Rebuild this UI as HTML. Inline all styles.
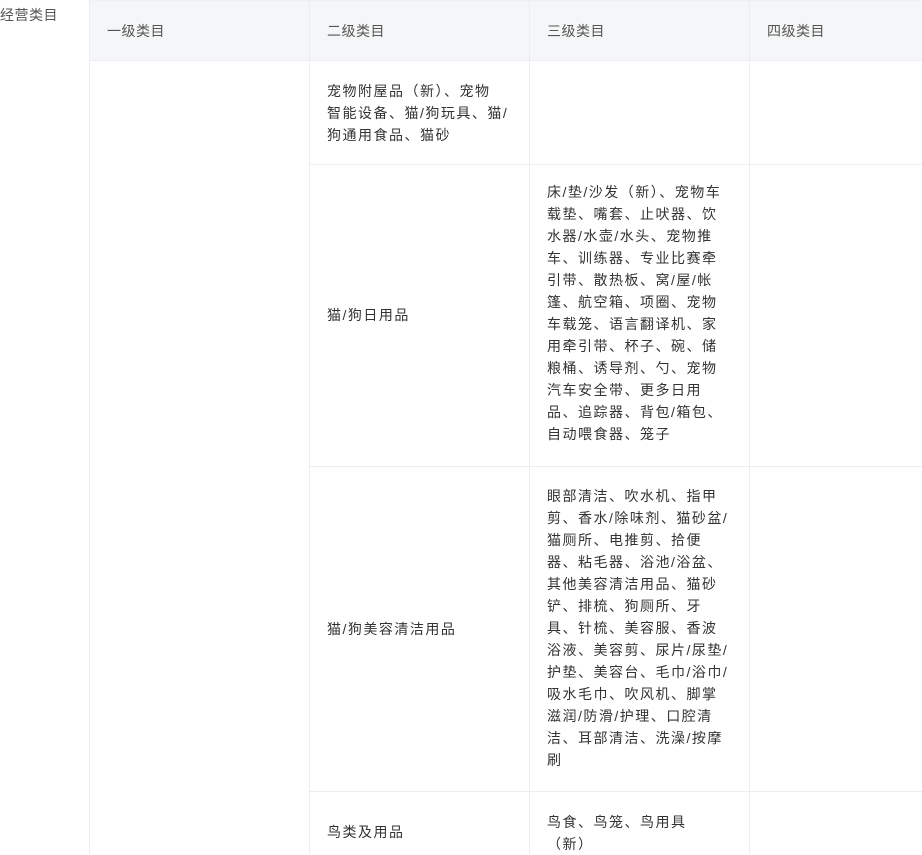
<!DOCTYPE html>
<html><head><meta charset="utf-8"><style>
body{margin:0;width:922px;height:854px;overflow:hidden;background:#fff;font-family:"Liberation Sans","Noto Sans CJK SC",sans-serif;font-size:14px;color:#333;position:relative}
.a{position:absolute}
.t{position:absolute;line-height:22px;white-space:nowrap;letter-spacing:1.5px}
.h{background:#f5f6f7}
.vl{position:absolute;width:1px;background:#ebedf0}
.hl{position:absolute;height:1px;background:#ebedf0}
</style></head><body>
<div class="t" style="left:0;top:4px;color:#555;letter-spacing:0.5px">经营类目</div>
<div class="a h" style="left:89px;top:0;width:833px;height:61px"></div>
<div class="hl" style="left:89px;top:0;width:833px;background:#f0f1f3"></div>
<div class="hl" style="left:89px;top:60px;width:833px"></div>
<div class="vl" style="left:89px;top:0;height:854px"></div>
<div class="vl" style="left:309px;top:0;height:854px"></div>
<div class="vl" style="left:529px;top:0;height:854px"></div>
<div class="vl" style="left:749px;top:0;height:854px"></div>
<div class="hl" style="left:309px;top:164px;width:613px"></div>
<div class="hl" style="left:309px;top:466px;width:613px"></div>
<div class="hl" style="left:309px;top:791px;width:613px"></div>
<div class="t" style="left:107px;top:20px;color:#555;letter-spacing:0.5px">一级类目</div>
<div class="t" style="left:327px;top:20px;color:#555;letter-spacing:0.5px">二级类目</div>
<div class="t" style="left:547px;top:20px;color:#555;letter-spacing:0.5px">三级类目</div>
<div class="t" style="left:767px;top:20px;color:#555;letter-spacing:0.5px">四级类目</div>
<div class="t" style="left:327px;top:80px">宠物附屋品（新）、宠物<br>智能设备、猫/狗玩具、猫/<br>狗通用食品、猫砂</div>
<div class="t" style="left:327px;top:304px">猫/狗日用品</div>
<div class="t" style="left:547px;top:181px">床/垫/沙发（新）、宠物车<br>载垫、嘴套、止吠器、饮<br>水器/水壶/水头、宠物推<br>车、训练器、专业比赛牵<br>引带、散热板、窝/屋/帐<br>篷、航空箱、项圈、宠物<br>车载笼、语言翻译机、家<br>用牵引带、杯子、碗、储<br>粮桶、诱导剂、勺、宠物<br>汽车安全带、更多日用<br>品、追踪器、背包/箱包、<br>自动喂食器、笼子</div>
<div class="t" style="left:327px;top:618px">猫/狗美容清洁用品</div>
<div class="t" style="left:547px;top:485px">眼部清洁、吹水机、指甲<br>剪、香水/除味剂、猫砂盆/<br>猫厕所、电推剪、拾便<br>器、粘毛器、浴池/浴盆、<br>其他美容清洁用品、猫砂<br>铲、排梳、狗厕所、牙<br>具、针梳、美容服、香波<br>浴液、美容剪、尿片/尿垫/<br>护垫、美容台、毛巾/浴巾/<br>吸水毛巾、吹风机、脚掌<br>滋润/防滑/护理、口腔清<br>洁、耳部清洁、洗澡/按摩<br>刷</div>
<div class="t" style="left:327px;top:821px">鸟类及用品</div>
<div class="t" style="left:547px;top:811px">鸟食、鸟笼、鸟用具<br>（新）</div>
</body></html>
